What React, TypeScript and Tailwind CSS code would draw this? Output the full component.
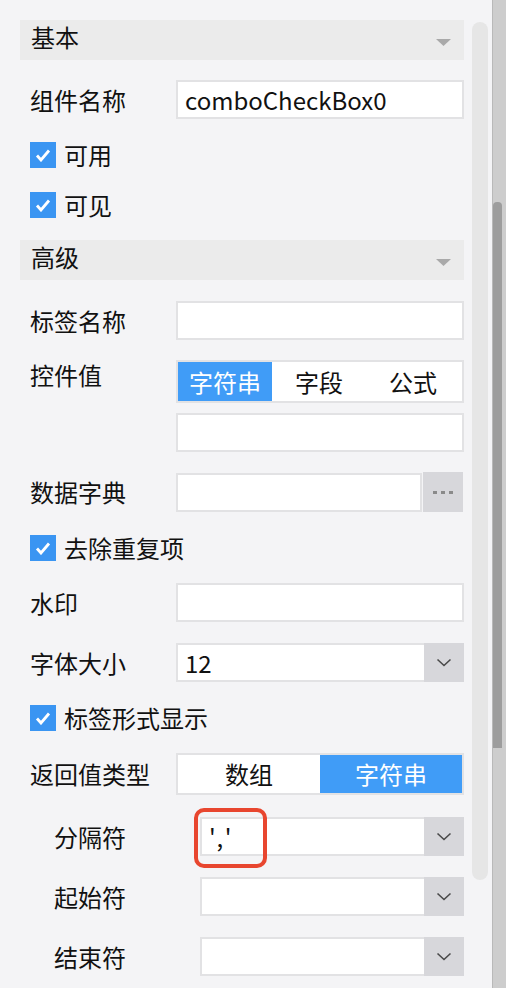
import type { ReactNode } from "react";

const font = { fontFamily: '"Noto Sans CJK SC", "Noto Sans", sans-serif' };

function SectionHeader({ title }: { title: string }) {
  return (
    <div className="flex h-[40px] items-center justify-between bg-[#ebebeb] pl-[11px] pr-[13px]">
      <span className="pb-[6px] text-[24px] leading-none text-[#111]">{title}</span>
      <svg width="15" height="8" viewBox="0 0 15 8" className="mt-[6px]">
        <path d="M0 0h15L7.5 7z" fill="#a9a9a9" />
      </svg>
    </div>
  );
}

function Check({ label, className = "" }: { label: string; className?: string }) {
  return (
    <div className={`flex h-[26px] items-center pl-[10px] ${className}`}>
      <span className="flex h-[26px] w-[26px] shrink-0 items-center justify-center bg-[#3a95f2]">
        <svg width="18" height="14" viewBox="0 0 18 14">
          <path d="M3 7.5l4 4.5L15 2.5" fill="none" stroke="#fff" strokeWidth="2.8" />
        </svg>
      </span>
      <span className="ml-[8px] text-[24px] leading-none text-[#111]">{label}</span>
    </div>
  );
}

function Row({
  label,
  children,
  className = "",
  labelClass = "",
  indent = false,
}: {
  label: string;
  children: ReactNode;
  className?: string;
  labelClass?: string;
  indent?: boolean;
}) {
  return (
    <div className={`flex ${className}`}>
      <span
        className={`shrink-0 text-[24px] leading-none text-[#111] ${indent ? "w-[180px] pl-[34px]" : "w-[156px] pl-[10px]"} ${labelClass}`}
      >
        {label}
      </span>
      {children}
    </div>
  );
}

function TextBox({ value = "", className = "w-[288px]" }: { value?: string; className?: string }) {
  return (
    <div
      className={`flex h-[39px] items-center border-2 border-[#e2e2e4] bg-white pl-[7px] text-[24px] leading-none text-[#111] ${className}`}
    >
      {value}
    </div>
  );
}

function Chevron() {
  return (
    <svg width="16" height="9" viewBox="0 0 16 9">
      <path d="M1.5 1.5l6.5 6 6.5-6" fill="none" stroke="#4a4a4a" strokeWidth="1.6" />
    </svg>
  );
}

function Select({
  value = "",
  width = "w-[288px]",
  valueClass = "",
  children,
}: {
  value?: string;
  width?: string;
  valueClass?: string;
  children?: ReactNode;
}) {
  return (
    <div className={`relative flex h-[39px] border-2 border-r-0 border-[#e2e2e4] bg-white ${width}`}>
      <div className={`flex flex-1 items-center pl-[7px] text-[24px] leading-none text-[#111] ${valueClass}`}>
        {value}
      </div>
      <div className="-my-[2px] flex w-[40px] items-center justify-center bg-[#d7d7db]">
        <Chevron />
      </div>
      {children}
    </div>
  );
}

function Segments({
  items,
  active,
  widths,
  height,
}: {
  items: string[];
  active: number;
  widths: string[];
  height: string;
}) {
  return (
    <div className={`flex w-[288px] border-2 border-[#e2e2e4] bg-white ${height}`}>
      {items.map((t, i) => (
        <div
          key={t}
          className={`flex items-center justify-center text-[24px] leading-none ${widths[i]} ${
            i === active ? "bg-[#409cf7] text-white" : "text-[#111]"
          }`}
        >
          {t}
        </div>
      ))}
    </div>
  );
}

export default function App() {
  return (
    <div className="flex h-[988px] w-[506px] overflow-hidden bg-[#f4f4f6]" style={font}>
      <div className="w-[464px] shrink-0 pl-[20px] pt-[20px]">
        <SectionHeader title="基本" />
        <Row label="组件名称" className="mt-[20px] items-center">
          <TextBox value="comboCheckBox0" />
        </Row>
        <Check label="可用" className="mt-[23px]" />
        <Check label="可见" className="mt-[24px]" />
        <div className="mt-[22px]">
          <SectionHeader title="高级" />
        </div>
        <Row label="标签名称" className="mt-[21px] items-center">
          <TextBox />
        </Row>
        <Row label="控件值" className="mt-[20px] items-start" labelClass="pt-[3px]">
          <div>
            <Segments
              items={["字符串", "字段", "公式"]}
              active={0}
              widths={["w-[94px]", "w-[94px]", "w-[94px]"]}
              height="h-[43px]"
            />
            <div className="mt-[10px]">
              <TextBox />
            </div>
          </div>
        </Row>
        <Row label="数据字典" className="mt-[20px] items-center">
          <TextBox className="w-[246px]" />
          <div className="ml-[1px] flex h-[40px] w-[40px] items-center justify-center gap-[4px] bg-[#d7d7db]">
            <span className="h-[3px] w-[4px] bg-[#8a8a8a]" />
            <span className="h-[3px] w-[4px] bg-[#8a8a8a]" />
            <span className="h-[3px] w-[4px] bg-[#8a8a8a]" />
          </div>
        </Row>
        <Check label="去除重复项" className="mt-[23px]" />
        <Row label="水印" className="mt-[22px] items-center">
          <TextBox />
        </Row>
        <Row label="字体大小" className="mt-[21px] items-center">
          <Select value="12" />
        </Row>
        <Check label="标签形式显示" className="mt-[23px]" />
        <Row label="返回值类型" className="mt-[22px] items-center">
          <Segments items={["数组", "字符串"]} active={1} widths={["w-[142px]", "w-[142px]"]} height="h-[42px]" />
        </Row>
        <Row label="分隔符" indent className="mt-[22px] items-center">
          <Select value="','" width="w-[264px]" valueClass="tracking-[4px]">
            <div className="absolute left-[-8px] top-[-11px] h-[60px] w-[73px] rounded-[10px] border-[4px] border-[#e8462f]" />
          </Select>
        </Row>
        <Row label="起始符" indent className="mt-[21px] items-center">
          <Select width="w-[264px]" />
        </Row>
        <Row label="结束符" indent className="mt-[21px] items-center">
          <Select width="w-[264px]" />
        </Row>
      </div>
      <div className="ml-[8px] mt-[22px] h-[858px] w-[16px] shrink-0 rounded-[8px] bg-[#e6e6e6]" />
      <div className="ml-[4px] flex w-[14px] shrink-0 border-l border-[#b9b9b9] bg-[#cdcdcd]">
        <div className="mt-[202px] h-[546px] w-[9px] rounded-t-[4px] bg-[#9d9d9d]" />
      </div>
    </div>
  );
}
